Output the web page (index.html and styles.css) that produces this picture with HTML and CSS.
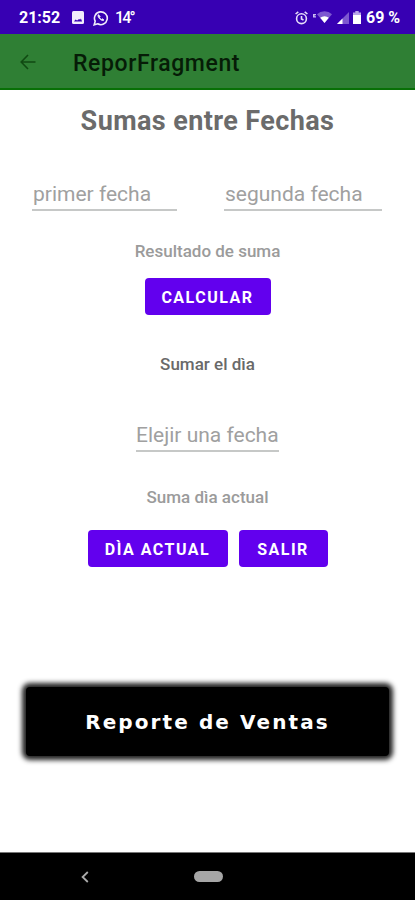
FILE: index.html
```
<!DOCTYPE html>
<html lang="es">
<head>
    <meta charset="UTF-8">
    <meta name="viewport" content="width=device-width, initial-scale=1.0">
    <title>ReporFragment</title>
    <link rel="stylesheet" href="styles.css">
</head>
<body>
    <div class="status-bar">
        <span class="clock">21:52</span>
        <svg class="icon-image" width="12" height="13" viewBox="0 0 12 13">
            <rect width="12" height="13" rx="1.5" fill="#f1edfb"/>
            <path d="M2 10.500l1.500-2 1.600 1 2-1.500 1 .8.800-1.200 1.200 2.900z" fill="#3700b3"/>
        </svg>
        <svg class="icon-whatsapp" width="16" height="16" viewBox="0 0 16 16" fill="none" stroke="#f1edfb">
            <path d="M1.200 14.800l1-3.600a6.400 6.400 0 1 1 2.500 2.600z" stroke-width="1.600"/>
            <path d="M5.400 4.600c-.9 1-.4 2.600 1.200 4.200s3.300 2.300 4.400 1.200l-1.500-1.200-1 .6c-.9-.4-1.500-1.100-1.900-1.900l.6-.9z" fill="#f1edfb" stroke-width=".8"/>
        </svg>
        <span class="temperature">14°</span>
        <span class="spacer"></span>
        <svg class="icon-alarm" width="13" height="14" viewBox="0 0 13 14" fill="none" stroke="#e6defa" stroke-width="1.600">
            <circle cx="6.500" cy="7.700" r="4.900"/>
            <path d="M6.500 5v3l2 1M.6 3L3.300.8M12.400 3L9.700.8"/>
        </svg>
        <svg class="icon-wifi" width="19" height="13" viewBox="0 0 19 13">
            <path d="M0 3h3v1.300H1.600v.9H3v1.300H0z" fill="#c9baf0"/>
            <path d="M4 3.200a11 11 0 0 1 15 0L11.500 12z" fill="#7d57d0"/>
            <path d="M7.200 6.800a6.500 6.500 0 0 1 8.600 0L11.500 12z" fill="#fff"/>
        </svg>
        <svg class="icon-signal" width="12" height="12" viewBox="0 0 12 12">
            <path d="M12 0v12H0z" fill="#7d57d0"/>
            <path d="M5.500 6.500V12H0z" fill="#fff"/>
        </svg>
        <svg class="icon-battery" width="8" height="13" viewBox="0 0 8 13">
            <path d="M0 1.500h2.300V0h3.400v1.500H8V4H0z" fill="#b9a5ea"/>
            <path d="M0 4h8v9H0z" fill="#fff"/>
        </svg>
        <span class="percent">69 %</span>
    </div>

    <header class="toolbar">
        <svg class="icon-back" width="16" height="16" viewBox="0 0 16 16" fill="none" stroke="#104a12" stroke-width="1.600">
            <path d="M15.500 8H1.500M8 1L1.200 8 8 15"/>
        </svg>
        <span class="toolbar-title">ReporFragment</span>
    </header>

    <main class="content">
        <h1>Sumas entre Fechas</h1>
        <div class="dates">
            <input type="text" class="field field-first" placeholder="primer fecha">
            <input type="text" class="field field-second" placeholder="segunda fecha">
        </div>
        <p class="label label-result">Resultado de suma</p>
        <button class="btn btn-calculate">CALCULAR</button>
        <p class="label label-day">Sumar el dìa</p>
        <input type="text" class="field field-day" placeholder="Elejir una fecha">
        <p class="label label-today">Suma dìa actual</p>
        <div class="actions">
            <button class="btn btn-today">DÌA ACTUAL</button>
            <button class="btn btn-exit">SALIR</button>
        </div>
        <div class="report">Reporte de Ventas</div>
    </main>

    <nav class="nav-bar">
        <svg class="icon-nav-back" width="8" height="12" viewBox="0 0 8 12" fill="none" stroke="#aaa" stroke-width="1.800">
            <path d="M6.800 1L1.600 6l5.200 5"/>
        </svg>
        <span class="home-pill"></span>
    </nav>
</body>
</html>
```
FILE: styles.css
```
* {
    box-sizing: border-box;
}

body {
    margin: 0;
    height: 900px;
    display: flex;
    flex-direction: column;
    font-family: Roboto, sans-serif;
    background-color: #ffffff;
    overflow: hidden;
}

.status-bar {
    height: 34px;
    padding: 1px 15px 0 19px;
    display: flex;
    align-items: center;
    background-color: #3700b3;
    color: #ffffff;
    font-size: 16px;
    font-weight: 700;
    white-space: nowrap;
}

.clock {
    width: 53px;
}

.icon-whatsapp {
    margin-left: 9px;
}

.temperature {
    margin-left: 6px;
    font-size: 16px;
    font-weight: 500;
    letter-spacing: -1.8px;
}

.spacer {
    flex: 1;
}

.icon-wifi {
    margin-left: 5px;
}

.icon-signal {
    margin-left: 5px;
}

.icon-battery {
    margin-left: 4px;
}

.percent {
    margin-left: 5px;
    width: 34px;
    font-size: 16px;
}

.toolbar {
    height: 56px;
    padding: 2px 20px 0;
    display: flex;
    align-items: center;
    background-color: #2f7f34;
    border-bottom: 2px solid #087006;
}

.toolbar-title {
    margin-left: 37px;
    padding-top: 2px;
    color: #061c07;
    font-size: 23px;
    font-weight: 500;
    letter-spacing: 0.6px;
}

.content {
    flex: 1;
    display: flex;
    flex-direction: column;
    align-items: center;
}

h1 {
    margin: 15px 0 0;
    color: #6b6b6b;
    font-size: 27px;
    line-height: 32px;
    font-weight: 700;
    letter-spacing: 0.4px;
}

.dates {
    align-self: stretch;
    margin-top: 42px;
    padding: 0 33px 0 32px;
    display: flex;
    justify-content: space-between;
}

.field {
    height: 32px;
    padding: 0;
    border: none;
    border-bottom: 2px solid #c6c8c7;
    outline: none;
    background: none;
    font-family: Roboto, sans-serif;
    font-size: 21px;
}

.field::placeholder {
    color: #a0a0a0;
    opacity: 1;
}

.field-first {
    width: 145px;
    padding-left: 1px;
}

.field-second {
    width: 158px;
    padding-left: 1px;
}

.field-day {
    width: 143px;
    margin-top: 46px;
}

.label {
    margin: 0;
    font-size: 17px;
    line-height: 20px;
    font-weight: 500;
    color: #9b9b9b;
}

.label-result {
    margin-top: 30px;
}

.label-day {
    margin-top: 39px;
    color: #696969;
}

.label-today {
    margin-top: 35px;
}

.btn {
    height: 37px;
    padding: 1px 0 0;
    border: none;
    border-radius: 4px;
    background-color: #6200ee;
    color: #ffffff;
    font-family: Roboto, sans-serif;
    font-size: 16px;
    font-weight: 700;
    letter-spacing: 1.5px;
}

.btn-calculate {
    width: 126px;
    margin-top: 17px;
}

.actions {
    display: flex;
    gap: 11px;
    margin-top: 23px;
}

.btn-today {
    width: 140px;
}

.btn-exit {
    width: 89px;
}

.report {
    width: 363px;
    height: 69px;
    margin-top: 120px;
    display: flex;
    align-items: center;
    justify-content: center;
    border-radius: 4px;
    background-color: #000000;
    box-shadow: 0 0 5px 4px #222222;
    color: #ffffff;
    font-family: "DejaVu Sans", sans-serif;
    font-size: 20px;
    font-weight: 700;
    letter-spacing: 2.1px;
}

.nav-bar {
    height: 48px;
    padding: 0 0 0 81px;
    display: flex;
    align-items: center;
    background-color: #000000;
    border-top: 1px solid #777777;
}

.home-pill {
    width: 29px;
    height: 11px;
    margin-left: 105px;
    border-radius: 6px;
    background-color: #a6a6a6;
}
```
